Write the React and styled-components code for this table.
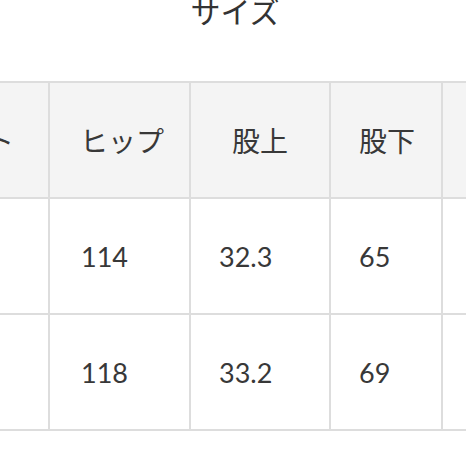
import React from "react";
import styled, { createGlobalStyle } from "styled-components";

const GlobalStyle = createGlobalStyle`
  html, body {
    margin: 0;
    padding: 0;
    background: #ffffff;
  }
`;

const Frame = styled.div`
  width: 466px;
  height: 466px;
  overflow: hidden;
  background: #ffffff;
  font-family: Lato, "Noto Sans CJK JP", sans-serif;
  color: #383838;
`;

const Title = styled.h2`
  margin: -4px 0 0;
  height: 30px;
  font-size: 30px;
  line-height: 30px;
  font-weight: 400;
  text-align: center;
  padding-left: 4px;
  color: #333333;
`;

const Table = styled.div`
  display: grid;
  grid-template-columns: 174px 139px 138px 110px 140px;
  grid-auto-rows: 114px;
  gap: 2px;
  padding: 2px;
  width: max-content;
  margin: 55px 0 0 -128px;
  background: #dddddd;
`;

const Cell = styled.div`
  display: flex;
  align-items: center;
  padding-left: ${(p) => 28 + (p.$indent || 0)}px;
  background: ${(p) => (p.$head ? "#f4f4f4" : "#ffffff")};
  font-size: ${(p) => (p.$head ? 28 : 27)}px;
  white-space: nowrap;
`;

const head = [
  { label: "ウエスト", indent: 0 },
  { label: "ヒップ", indent: 2 },
  { label: "股上", indent: 13 },
  { label: "股下", indent: 0 },
  { label: "わたり幅", indent: 0 },
];

const rows = [
  ["76", "114", "32.3", "65", "36"],
  ["80", "118", "33.2", "69", "37"],
];

export default function App() {
  return (
    <Frame>
      <GlobalStyle />
      <Title>サイズ</Title>
      <Table>
        {head.map((h) => (
          <Cell key={h.label} $head $indent={h.indent}>
            {h.label}
          </Cell>
        ))}
        {rows.map((r, i) =>
          r.map((v, j) => (
            <Cell key={`${i}-${j}`} $indent={j === 1 ? 3 : 0}>
              {v}
            </Cell>
          ))
        )}
      </Table>
    </Frame>
  );
}
